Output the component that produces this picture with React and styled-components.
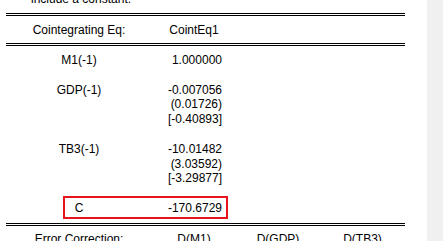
import React from "react";
import styled, { createGlobalStyle } from "styled-components";

const GlobalStyle = createGlobalStyle`
  html, body {
    margin: 0;
    padding: 0;
    background: #ffffff;
    overflow: hidden;
  }
  body {
    font-family: "Liberation Sans", Arial, sans-serif;
    font-size: 12px;
    color: #000000;
  }
`;

const columns = "146px 84px 84px 85px";

const coefficients = [
  { label: "M1(-1)", value: "1.000000" },
  {},
  { label: "GDP(-1)", value: "-0.007056" },
  { value: "(0.01726)" },
  { value: "[-0.40893]" },
  {},
  { label: "TB3(-1)", value: "-10.01482" },
  { value: "(3.03592)" },
  { value: "[-3.29877]" },
  {},
  { label: "C", value: "-170.6729" },
];

const App = () => {
  return (
    <Window>
      <GlobalStyle />
      <Output>
        <Note>include a constant.</Note>
        <DoubleRule $top={6} />
        <HeaderRow>
          <Cell $align="center">Cointegrating Eq:</Cell>
          <Cell $align="center">CointEq1</Cell>
          <Cell />
          <Cell />
        </HeaderRow>
        <DoubleRule />
        <Body>
          {coefficients.map((row, i) => (
            <BodyRow key={i}>
              <Cell $align="center">{row.label || "\u00a0"}</Cell>
              <Cell $align="right">{row.value || ""}</Cell>
              <Cell />
              <Cell />
            </BodyRow>
          ))}
        </Body>
        <DoubleRule />
        <HeaderRow>
          <Cell $align="center">Error Correction:</Cell>
          <Cell $align="center">D(M1)</Cell>
          <Cell $align="center">D(GDP)</Cell>
          <Cell $align="center">D(TB3)</Cell>
        </HeaderRow>
        <Highlight />
      </Output>
      <ScrollTrack />
    </Window>
  );
};

const Window = styled.div`
  display: flex;
  width: 443px;
  height: 241px;
  overflow: hidden;
`;

const Output = styled.div`
  position: relative;
  flex: 1;
  padding-left: 6px;
  margin-top: -8px;
`;

const ScrollTrack = styled.div`
  width: 16px;
  flex-shrink: 0;
  background: #f0f0f0;
`;

const Note = styled.div`
  padding-left: 25px;
  line-height: 15px;
  white-space: nowrap;
`;

const DoubleRule = styled.div`
  width: 399px;
  height: 1px;
  margin-top: ${(p) => (p.$top ? `${p.$top}px` : "0")};
  border-top: 1px solid #000000;
  border-bottom: 1px solid #000000;
`;

const HeaderRow = styled.div`
  display: grid;
  grid-template-columns: ${columns};
  width: 399px;
  height: 27px;
  align-items: center;
`;

const Body = styled.div`
  width: 399px;
  padding: 7px 0 7.2px;
`;

const BodyRow = styled.div`
  display: grid;
  grid-template-columns: ${columns};
  line-height: 14.8px;
`;

const Cell = styled.div`
  text-align: ${(p) => p.$align || "left"};
  padding-right: ${(p) => (p.$align === "right" ? "14px" : "0")};
  white-space: nowrap;
`;

const Highlight = styled.div`
  position: absolute;
  left: 63px;
  top: 204px;
  width: 165px;
  height: 23px;
  box-sizing: border-box;
  border: 2px solid #e8141b;
  pointer-events: none;
`;

export default App;
